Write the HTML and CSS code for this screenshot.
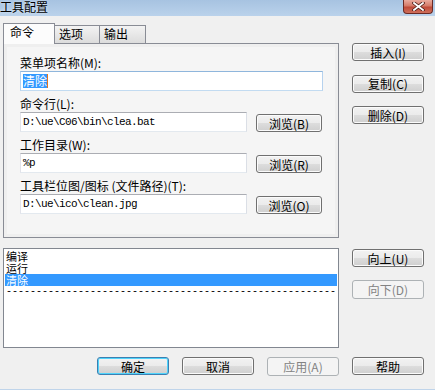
FILE: index.html
```html
<!DOCTYPE html>
<html lang="zh-CN">
<head>
    <meta charset="UTF-8">
    <title>工具配置</title>
    <link rel="stylesheet" href="styles.css">
</head>
<body>
    <div class="window">
        <div class="titlebar">
            <span class="title">工具配置</span>
            <span class="close">
                <svg width="13" height="9" viewBox="0 0 13 9">
                    <path d="M2 1 L11 8 M11 1 L2 8" stroke="#4a1a14" stroke-width="3.4" stroke-linecap="square"/>
                    <path d="M2 1 L11 8 M11 1 L2 8" stroke="#ffffff" stroke-width="1.8" stroke-linecap="square"/>
                </svg>
            </span>
        </div>

        <div class="client">
            <!-- tab page + side buttons -->
            <div class="row">
                <div class="tabs-area">
                    <div class="tabs">
                        <div class="tab active">命令</div>
                        <div class="tab second">选项</div>
                        <div class="tab third">输出</div>
                    </div>
                    <div class="panel">
                        <div class="page">
                            <div class="group">
                                <div class="label">菜单项名称(M):</div>
                                <div class="field-row">
                                    <div class="field wide focused"><span class="sel">清除</span><span class="caret"></span></div>
                                </div>
                            </div>
                            <div class="group">
                                <div class="label">命令行(L):</div>
                                <div class="field-row">
                                    <div class="field">D:\ue\C06\bin\clea.bat</div>
                                    <button class="btn browse">浏览(B)</button>
                                </div>
                            </div>
                            <div class="group">
                                <div class="label">工作目录(W):</div>
                                <div class="field-row">
                                    <div class="field">%p</div>
                                    <button class="btn browse">浏览(R)</button>
                                </div>
                            </div>
                            <div class="group">
                                <div class="label">工具栏位图/图标 (文件路径)(T):</div>
                                <div class="field-row">
                                    <div class="field">D:\ue\ico\clean.jpg</div>
                                    <button class="btn browse">浏览(O)</button>
                                </div>
                            </div>
                        </div>
                    </div>
                </div>
                <div class="side top-side">
                    <button class="btn">插入(I)</button>
                    <button class="btn">复制(C)</button>
                    <button class="btn">删除(D)</button>
                </div>
            </div>

            <!-- menu list -->
            <div class="row middle">
                <div class="listbox">
                    <div class="item">编译</div>
                    <div class="item">运行</div>
                    <div class="item selected">清除</div>
                    <div class="item separator">-------------------------------------------------------</div>
                </div>
                <div class="side list-side">
                    <button class="btn">向上(U)</button>
                    <button class="btn" disabled>向下(D)</button>
                </div>
            </div>

            <div class="footer">
                <button class="btn default">确定</button>
                <button class="btn">取消</button>
                <button class="btn" disabled>应用(A)</button>
                <button class="btn">帮助</button>
            </div>
        </div>
    </div>
</body>
</html>
```

FILE: styles.css
```css
* {
    box-sizing: border-box;
}
body {
    margin: 0;
    width: 435px;
    height: 390px;
    overflow: hidden;
    background: #f0f0f0;
    color: #000;
    font-family: "Noto Sans CJK SC", "Liberation Sans", sans-serif;
    font-size: 12px;
}
.window {
    height: 390px;
    border-bottom: 1px solid #bfd4ea;
    display: flex;
    flex-direction: column;
}

/* --- TITLE BAR --- */
.titlebar {
    height: 16px;
    flex-shrink: 0;
    display: flex;
    justify-content: space-between;
    align-items: flex-start;
    background: linear-gradient(#a7c3e1, #bad2eb);
}
.title {
    font-size: 12px;
    line-height: 14px;
    text-shadow: 0 0 3px #e8f1fb;
}
.close {
    width: 30px;
    height: 14px;
    margin-right: 2px;
    border: 1px solid #6b2a24;
    border-top: none;
    border-radius: 0 0 4px 4px;
    background: linear-gradient(#e9ab9e, #d57a68 45%, #c04a38 55%, #cf6f5b);
    display: flex;
    align-items: center;
    justify-content: center;
}

/* --- CLIENT AREA --- */
.client {
    padding: 7px 11px 0 3px;
    display: flex;
    flex-direction: column;
}
.row {
    display: grid;
    grid-template-columns: 336px 72px;
    column-gap: 13px;
}
.side {
    display: flex;
    flex-direction: column;
}
.top-side {
    padding-top: 20px;
    gap: 13.5px;
}
.list-side {
    padding-top: 1px;
    gap: 13px;
}

/* --- TABS --- */
.tabs {
    display: flex;
    height: 20px;
    align-items: flex-end;
}
.tab {
    height: 18px;
    border: 1px solid #898c95;
    border-bottom: none;
    background: linear-gradient(#f3f3f3, #dcdcdc);
    padding: 1px 0 0 4px;
    line-height: 14px;
    margin-left: -1px;
}
.tab.active {
    width: 52px;
    height: 21px;
    margin-left: 0;
    margin-bottom: -1px;
    padding-left: 6px;
    background: #fcfcfc;
    position: relative;
    z-index: 1;
}
.tab.second {
    width: 46px;
}
.tab.third {
    width: 47px;
}
.panel {
    height: 195px;
    border: 1px solid #898c95;
    padding: 3px;
    background: #efefef;
}
.page {
    height: 100%;
    background: #f5f5f5;
    padding: 3px 0 0 13px;
}
.group .label {
    height: 14px;
    line-height: 14px;
    margin-top: 6px;
    white-space: nowrap;
}
.field-row {
    display: flex;
    align-items: flex-end;
    margin-top: 1px;
}
.field {
    width: 227px;
    height: 20px;
    background: #fff;
    border: 1px solid;
    border-color: #abadb3 #dbdfe6 #e3e9ef #e2e3ea;
    padding: 0 2px;
    font-family: "Liberation Mono", monospace;
    font-size: 11px;
    letter-spacing: -0.6px;
    line-height: 18px;
    white-space: nowrap;
}
.field.wide {
    width: 303px;
}
.field.focused {
    border-color: #8fb6dc #b6d2ee #c2dbf1 #b6d2ee;
    display: flex;
    align-items: center;
}
.sel {
    font-family: "Noto Sans CJK SC", sans-serif;
    font-size: 12px;
    letter-spacing: 0;
    line-height: 14px;
    background: #3399ff;
    color: #fff;
}
.caret {
    width: 1px;
    height: 14px;
    background: #e3761c;
}

/* --- BUTTONS --- */
.btn {
    width: 72px;
    height: 18px;
    padding: 0;
    border: 1px solid #707070;
    border-radius: 3px;
    background: linear-gradient(#f2f2f2 0%, #ebebeb 50%, #dddddd 50%, #cfcfcf 100%);
    box-shadow: inset 0 0 0 1px #fbfbfb;
    font-family: inherit;
    font-size: 12px;
    line-height: 15px;
    color: #000;
    text-align: center;
    white-space: nowrap;
}
.btn.browse {
    width: 66px;
    margin-left: 9px;
}
.btn:disabled {
    height: 19px;
    border-color: #adb2b5;
    background: #f4f4f4;
    box-shadow: none;
    color: #838383;
}
.btn.default {
    border-color: #3c7fb1;
    box-shadow: inset 0 0 0 1px #4fd3fb;
}

/* --- LIST --- */
.middle {
    margin-top: 10px;
}
.listbox {
    height: 100px;
    border: 1px solid #828790;
    background: #fff;
    padding: 1px;
    overflow: hidden;
}
.item {
    height: 12px;
    font-size: 11px;
    line-height: 12px;
    padding-left: 1px;
    white-space: nowrap;
}
.item.selected {
    background: #3399ff;
    color: #fff;
}
.item.separator {
    font-family: "Liberation Mono", monospace;
    font-size: 10px;
    line-height: 10px;
    padding-top: 1px;
}

/* --- FOOTER --- */
.footer {
    margin-top: 9px;
    display: flex;
    justify-content: flex-end;
    gap: 13px;
}
```
